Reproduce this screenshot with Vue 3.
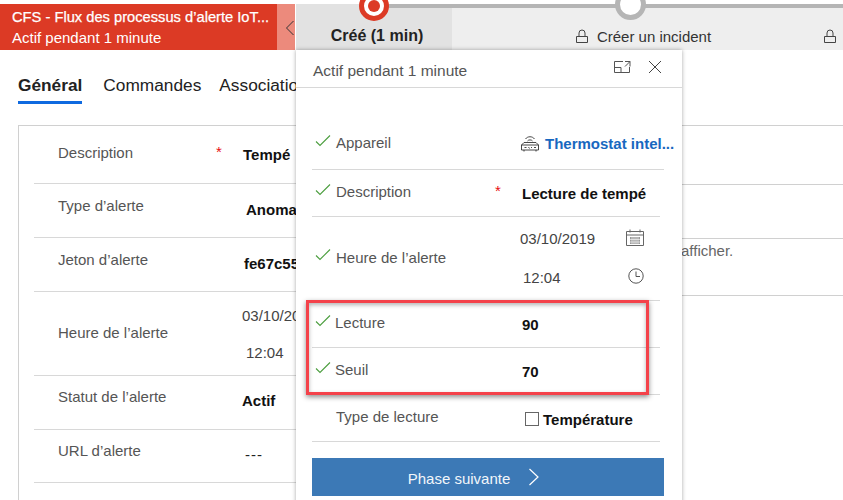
<script setup>
const formRows = [
  { label: 'Description', h: 58, lt: 19, vt: 21, values: [{ t: 'Tempé', bold: true, x: 243 }], req: true },
  { label: 'Type d’alerte', h: 54, lt: 14, vt: 18, values: [{ t: 'Anoma', bold: true, x: 246 }] },
  { label: 'Jeton d’alerte', h: 54, lt: 14, vt: 18, values: [{ t: 'fe67c55', bold: true, x: 244 }] },
  { label: 'Heure de l’alerte', h: 84, lt: 33, vt: 16, values: [{ t: '03/10/2019', x: 242 }, { t: '12:04', x: 246 }], multi: true },
  { label: 'Statut de l’alerte', h: 54, lt: 13, vt: 17, values: [{ t: 'Actif', bold: true, x: 242 }] },
  { label: 'URL d’alerte', h: 53, lt: 13, vt: 17, values: [{ t: '---', x: 245, dash: true }] }
]
const sideRows = [{ h: 59 }, { h: 54 }, { h: 57, t: 'afficher.' }]
</script>

<template>
  <div class="page">
    <header class="bar">
      <div class="title">
        <div class="t1">CFS - Flux des processus d’alerte IoT...</div>
        <div class="t2">Actif pendant 1 minute</div>
      </div>
      <div class="collapse">
        <svg width="10" height="16" viewBox="0 0 10 16"><path d="M8.500 1 1.500 8l7 7" fill="none" stroke="#333" stroke-width="1"/></svg>
      </div>
      <div class="stages">
        <div class="stage active">
          <span class="dot red"></span>
          Créé (1 min)
        </div>
        <div class="stage mid">
          <span class="dot grey"></span>
          <svg class="lock" width="12" height="15" viewBox="0 0 12 15"><path d="M3 7V4a3 3 0 0 1 6 0v3M.5 7.500h11v6H.5z" fill="none" stroke="#444"/></svg>
          Créer un incident
        </div>
        <div class="stage last">
          <svg class="lock" width="12" height="15" viewBox="0 0 12 15"><path d="M3 7V4a3 3 0 0 1 6 0v3M.5 7.500h11v6H.5z" fill="none" stroke="#444"/></svg>
        </div>
      </div>
    </header>

    <nav class="tabs">
      <span class="tab on">Général</span>
      <span class="tab">Commandes</span>
      <span class="tab">Associations</span>
    </nav>

    <section class="form">
      <div class="fcol">
        <div v-for="r in formRows" :key="r.label" class="frow" :style="{ height: r.h + 'px' }">
          <div class="flabel" :style="{ paddingTop: r.lt + 'px' }">{{ r.label }}</div>
          <span v-if="r.req" class="req freq">*</span>
          <div class="fvals" :class="{ multi: r.multi }" :style="{ paddingTop: r.vt + 'px' }">
            <div v-for="v in r.values" :key="v.t" :class="{ b: v.bold, dash: v.dash }" :style="{ marginLeft: (v.x - 242) + 'px' }">{{ v.t }}</div>
          </div>
        </div>
      </div>
      <div class="side">
        <div v-for="(s, i) in sideRows" :key="i" class="srow" :style="{ height: s.h + 'px' }">{{ s.t }}</div>
      </div>
    </section>

    <aside class="fly">
      <div class="flyhead">
        <span>Actif pendant 1 minute</span>
        <div class="flyicons">
          <svg width="17" height="12" viewBox="0 0 17 12"><path d="M9 .5H.5v11h15V6M.5 6.500H7v5M11 .5h5v5M16 .5l-5 5" fill="none" stroke="#555"/></svg>
          <svg width="14" height="14" viewBox="0 0 14 14"><path d="m1 1 12 12M13 1 1 13" fill="none" stroke="#444"/></svg>
        </div>
      </div>
      <div class="flybody">
        <div class="row appareil" style="height:52px">
          <svg class="chk" viewBox="0 0 16 12"><path d="m1 6.500 4 4 10-10" fill="none" stroke="#4c9e3f" stroke-width="1.100"/></svg>
          <span class="lab">Appareil</span>
          <span class="link">
            <svg width="18" height="17" viewBox="0 0 18 17"><path d="M3 7.500h12l2.500 2.500v5H.5v-5zM.5 10h17M3 15v1.500M15 15v1.500M4.500 4C6.500 1 11.500 1 13.500 4M6.500 6c1-1.500 4-1.500 5 0M3.500 12.500h2M7.500 12l1 1.500M10 12.500h1M13 12.500h2" fill="none" stroke="#333" stroke-width=".9"/></svg>
            Thermostat intel...
          </span>
        </div>
        <div class="row short" style="height:47px">
          <svg class="chk" viewBox="0 0 16 12"><path d="m1 6.500 4 4 10-10" fill="none" stroke="#4c9e3f" stroke-width="1.100"/></svg>
          <span class="lab">Description</span>
          <span class="req">*</span>
          <span class="val b">Lecture de tempé</span>
        </div>
        <div class="row short time" style="height:84px">
          <svg class="chk" viewBox="0 0 16 12"><path d="m1 6.500 4 4 10-10" fill="none" stroke="#4c9e3f" stroke-width="1.100"/></svg>
          <span class="lab">Heure de l’alerte</span>
          <div class="dt">
            <div class="dtl"><span>03/10/2019</span>
              <svg class="cal" width="18" height="17" viewBox="0 0 18 17"><path d="M.5 2.500h17v14H.5zM.5 6h17M4 .5v3M14 .5v3" fill="none" stroke="#666"/><path d="M4 8h10v7H4z" fill="#999"/><path d="M6 8v7M8 8v7M10 8v7M12 8v7M4 10.500h10M4 13h10" stroke="#fff" stroke-width=".6"/></svg>
            </div>
            <div class="dtl second"><span>12:04</span>
              <svg class="clk" width="16" height="16" viewBox="0 0 16 16"><circle cx="8" cy="8" r="7.200" fill="none" stroke="#555"/><path d="M8 3.500V8.500h4" fill="none" stroke="#555"/></svg>
            </div>
          </div>
        </div>
        <div class="row short" style="height:47px">
          <svg class="chk" viewBox="0 0 16 12"><path d="m1 6.500 4 4 10-10" fill="none" stroke="#4c9e3f" stroke-width="1.100"/></svg>
          <span class="lab tight">Lecture</span>
          <span class="val b">90</span>
        </div>
        <div class="row short" style="height:47px">
          <svg class="chk" viewBox="0 0 16 12"><path d="m1 6.500 4 4 10-10" fill="none" stroke="#4c9e3f" stroke-width="1.100"/></svg>
          <span class="lab tight">Seuil</span>
          <span class="val b">70</span>
        </div>
        <div class="row short" style="height:47px">
          <span class="chk"></span>
          <span class="lab">Type de lecture</span>
          <span class="val b typ"><i class="box"></i>Température</span>
        </div>
      </div>
      <button class="nextbtn"><span class="btxt">Phase suivante</span>
        <svg width="12" height="18" viewBox="0 0 12 18"><path d="m1.500 1 8.500 8-8.500 8" fill="none" stroke="#fff" stroke-width="1.200"/></svg>
      </button>
      <div class="mark"></div>
    </aside>
  </div>
</template>

<style scoped>
.page { position: relative; width: 843px; height: 500px; overflow: hidden; background: #fff; font-family: "Liberation Sans", Arial, sans-serif; font-size: 15px; color: #555; }
.bar { display: flex; height: 46px; position: absolute; top: 4px; left: 0; right: 0; }
.title { width: 277px; background: #dc3a25; color: #fff; padding: 4px 0 0 12px; box-sizing: border-box; line-height: 19.500px; white-space: nowrap; overflow: hidden; }
.t1 { font-size: 14.700px; -webkit-text-stroke: .25px #fff; }
.t2 { font-size: 15px; }
.collapse { width: 18px; background: #ec8a7c; display: flex; align-items: center; justify-content: flex-end; padding: 1px 0 0 0; box-sizing: border-box; }
.stages { flex: 1; display: flex; margin-left: 1px; background: #eee; }
.stage { position: relative; display: flex; align-items: center; justify-content: center; gap: 9px; font-size: 15px; color: #333; padding-top: 14px; box-sizing: border-box; border-top: 4px solid #b5b5b5; }
.stage.active { width: 156px; padding-left: 6px; background: #e2e2e2; border-top-color: #e2e2e2; font-size: 16px; font-weight: 700; color: #222; }
.stage.active::before { content: ""; position: absolute; left: 78px; right: 0; top: -4px; height: 4px; background: #b5b5b5; }
.stage.mid { width: 366px; padding-left: 17px; }
.stage.last { flex: 1; justify-content: flex-start; padding-left: 6px; }
.dot { position: absolute; width: 30px; height: 30px; border-radius: 50%; box-sizing: border-box; background: #fff; }
.dot.red { left: 63px; top: -17px; border: 5px solid #dc3a25; }
.dot.red::after { content: ""; position: absolute; inset: 4px; border-radius: 50%; background: #dc3a25; }
.dot.grey { left: 163px; top: -19px; width: 31px; height: 31px; border: 5px solid #b5b5b5; }
.tabs { position: absolute; top: 75px; left: 18px; display: flex; gap: 18px; font-size: 17.300px; color: #222; white-space: nowrap; }
.tab { height: 29px; line-height: 21px; box-sizing: border-box; }
.tab.on { font-weight: 700; border-bottom: 3px solid #0f6ae0; margin-right: 3px; }
.form { position: absolute; top: 125px; left: 18px; width: 900px; height: 420px; box-sizing: border-box; border: 1px solid #d0d0d0; padding-left: 15px; display: flex; }
.fcol { width: 616px; flex: none; }
.side { flex: 1; padding-left: 31px; }
.srow { border-bottom: 1px solid #d0d0d0; box-sizing: border-box; color: #666; padding-top: 4px; line-height: 16px; }
.frow { display: flex; border-bottom: 1px solid #d8d8d8; box-sizing: border-box; position: relative; }
.flabel { width: 208px; padding-left: 24px; box-sizing: border-box; line-height: 16px; color: #555; }
.freq { position: absolute; left: 182px; top: 17px; }
.fvals { line-height: 16px; color: #444; }
.fvals.multi { display: flex; flex-direction: column; gap: 21px; }
.fvals .b { font-weight: 700; color: #111; }
.fvals .dash { letter-spacing: 1px; color: #222; }
.req { color: #e81010; font-size: 15px; }
.fly { position: absolute; left: 296px; top: 50px; width: 386px; height: 470px; background: #fff; box-shadow: 0 0 4px rgba(0,0,0,.35); padding: 0 18px 0 16px; box-sizing: border-box; }
.flyhead { height: 38px; margin: 0 -18px 0 -16px; padding: 5px 20px 0 17px; border-bottom: 1px solid #d8d8d8; display: flex; align-items: center; justify-content: space-between; color: #555; font-size: 15.500px; box-sizing: border-box; }
.flyicons { display: flex; align-items: center; gap: 17px; margin-bottom: 8px; }
.flybody { padding-top: 30px; }
.row { display: flex; align-items: flex-start; position: relative; border-bottom: 1px solid #d8d8d8; box-sizing: border-box; padding-top: 14px; }
.row.appareil { padding-top: 17px; }
.row.short { width: 348px; }
.row.time { align-items: center; padding-top: 0; }
.chk { width: 16px; height: 12px; flex: none; margin-left: 3px; }
.time .chk { margin-top: -7px; }
.lab { margin-left: 5px; line-height: 16px; color: #555; }
.lab.tight { margin-left: 4px; }
.time .lab { margin-top: -2px; }
.row > .req { position: absolute; left: 183px; top: 12px; }
.val { position: absolute; left: 210px; top: 16px; line-height: 16px; color: #111; white-space: nowrap; }
.val.b { font-weight: 700; }
.typ { left: 213px; top: 17px; display: flex; align-items: center; }
.box { width: 14px; height: 14px; border: 1px solid #666; box-sizing: border-box; margin-right: 4px; margin-top: -2px; }
.link { position: absolute; left: 209px; top: 17px; display: flex; align-items: center; gap: 6px; color: #1868c0; font-weight: 700; white-space: nowrap; }
.dt { position: absolute; left: 208px; top: 0; width: 124px; }
.dtl { display: flex; justify-content: space-between; align-items: center; height: 17px; margin-top: 13px; line-height: 16px; color: #444; }
.dtl.second { margin-top: 22px; padding-left: 3px; }
.cal { margin-bottom: 3px; }
.clk { margin-bottom: 4px; }
.nextbtn { display: flex; align-items: center; justify-content: center; gap: 18px; width: 352px; height: 38px; margin-top: 16px; padding: 0 28px 0 0; border: 0; background: #3c79b6; color: #f2f6fa; font: 15px "Liberation Sans", Arial, sans-serif; }
.btxt { margin-top: 2px; }
.mark { position: absolute; left: 10px; top: 250px; width: 343px; height: 95px; box-sizing: border-box; border: 3px solid #f4424a; box-shadow: 0 2px 5px rgba(0,0,0,.45), inset 0 2px 4px rgba(0,0,0,.3); }
</style>
